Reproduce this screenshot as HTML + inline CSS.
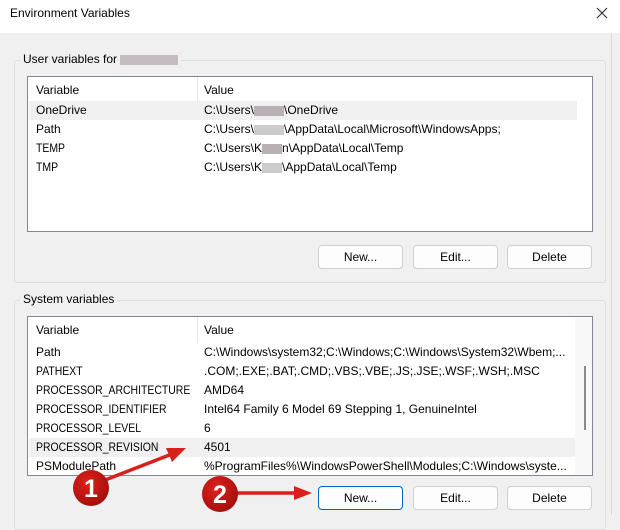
<!DOCTYPE html>
<html><head><style>
*{margin:0;padding:0;box-sizing:border-box}
body{width:620px;height:515px;overflow:hidden;background:#f0f0f0;font-family:"Liberation Sans",sans-serif;font-size:12px;color:#000;position:relative}
.a{position:absolute}
.title{left:0;top:0;width:620px;height:33px;background:#fff}
.gb{border:1px solid #dcdcdc;border-radius:3px}
.lbl{background:#f0f0f0;padding:0 3px}
.list{background:#fff;border:1px solid #828790}
.row{position:absolute;left:1px;height:19px;line-height:19px;white-space:nowrap}
.row span{position:absolute}
.row span.v{transform:scaleX(0.87);transform-origin:0 50%}
.btn{background:#fdfdfd;border:1px solid #d0d0d0;border-radius:4px;height:24px;width:85px;text-align:center;line-height:22px}
.blur{display:inline-block;background:#b8b0b4;height:10px;vertical-align:middle}
</style></head><body>
<div class="a title"></div>
<div class="a" style="left:10px;top:6px;font-size:12px">Environment Variables</div>
<svg class="a" style="left:595px;top:6px" width="14" height="14"><path d="M2 2L12 12M12 2L2 12" stroke="#333" stroke-width="1.2"/></svg>
<div class="a" style="left:611px;top:33px;width:1px;height:482px;background:#d8d8d8"></div>

<div class="a gb" style="left:14px;top:60px;width:592px;height:223px"></div>
<div class="a lbl" style="left:20px;top:52px">User variables for <span class="blur" style="width:58px;background:#c4bcc0"></span></div>
<div class="a list" style="left:27px;top:76px;width:566px;height:156px">
 <div class="a" style="left:169px;top:0;width:1px;height:26px;background:#e5e5e5"></div>
 <div class="row" style="top:4px;width:548px"><span style="left:7px">Variable</span><span style="left:175px">Value</span></div>
 <div class="row" style="top:24px;width:548px;background:#f0f0f0"><span style="left:7px">OneDrive</span><span style="left:175px">C:\Users\<span class="blur" style="width:30px;position:static"></span>\OneDrive</span></div>
 <div class="row" style="top:43px;width:548px"><span style="left:7px">Path</span><span style="left:175px">C:\Users\<span class="blur" style="width:30px;position:static;background:#ccc"></span>\AppData\Local\Microsoft\WindowsApps;</span></div>
 <div class="row" style="top:62px;width:548px"><span class="v" style="left:7px">TEMP</span><span style="left:175px">C:\Users\K<span class="blur" style="width:20px;position:static"></span>n\AppData\Local\Temp</span></div>
 <div class="row" style="top:81px;width:548px"><span class="v" style="left:7px">TMP</span><span style="left:175px">C:\Users\K<span class="blur" style="width:20px;position:static;background:#ccc"></span>\AppData\Local\Temp</span></div>
</div>
<div class="a btn" style="left:318px;top:245px">New...</div>
<div class="a btn" style="left:413px;top:245px">Edit...</div>
<div class="a btn" style="left:507px;top:245px">Delete</div>

<div class="a gb" style="left:14px;top:300px;width:592px;height:230px"></div>
<div class="a lbl" style="left:20px;top:292px">System variables</div>
<div class="a list" style="left:27px;top:316px;width:566px;height:160px;overflow:hidden">
 <div class="a" style="left:169px;top:0;width:1px;height:26px;background:#e5e5e5"></div>
 <div class="a" style="left:547px;top:0;width:18px;height:160px;background:#f8f8f8"></div>
 <div class="a" style="left:556px;top:49px;width:2px;height:64px;background:#8a8a8a"></div>
 <div class="row" style="top:4px;width:548px"><span style="left:7px">Variable</span><span style="left:175px">Value</span></div>
 <div class="row" style="top:26px;width:548px"><span style="left:7px">Path</span><span style="left:175px">C:\Windows\system32;C:\Windows;C:\Windows\System32\Wbem;...</span></div>
 <div class="row" style="top:45px;width:548px"><span class="v" style="left:7px">PATHEXT</span><span style="left:175px">.COM;.EXE;.BAT;.CMD;.VBS;.VBE;.JS;.JSE;.WSF;.WSH;.MSC</span></div>
 <div class="row" style="top:64px;width:548px"><span class="v" style="left:7px">PROCESSOR_ARCHITECTURE</span><span style="left:175px">AMD64</span></div>
 <div class="row" style="top:83px;width:548px"><span class="v" style="left:7px">PROCESSOR_IDENTIFIER</span><span style="left:175px">Intel64 Family 6 Model 69 Stepping 1, GenuineIntel</span></div>
 <div class="row" style="top:102px;width:548px"><span class="v" style="left:7px">PROCESSOR_LEVEL</span><span style="left:175px">6</span></div>
 <div class="row" style="top:121px;width:546px;background:#f0f0f0"><span class="v" style="left:7px">PROCESSOR_REVISION</span><span style="left:175px">4501</span></div>
 <div class="row" style="top:140px;width:548px"><span style="left:7px">PSModulePath</span><span style="left:175px">%ProgramFiles%\WindowsPowerShell\Modules;C:\Windows\syste...</span></div>
</div>
<div class="a btn" style="left:318px;top:486px;border-color:#0067c0">New...</div>
<div class="a btn" style="left:413px;top:486px">Edit...</div>
<div class="a btn" style="left:507px;top:486px">Delete</div>

<svg class="a" style="left:0;top:0" width="620" height="515">
 <defs><radialGradient id="g" cx="40%" cy="35%" r="70%"><stop offset="0" stop-color="#e0201c"/><stop offset="1" stop-color="#a00e0c"/></radialGradient></defs>
 <path d="M100 482L172 454" stroke="#d8201c" stroke-width="3.5" fill="none"/>
 <path d="M186 448L166 448L172 462Z" fill="#d8201c"/>
 <path d="M235 493L296 493" stroke="#d8201c" stroke-width="3.5"/>
 <path d="M312 493L294 486L294 500Z" fill="#d8201c"/>
 <circle cx="91" cy="488" r="18" fill="url(#g)"/>
 <circle cx="220" cy="494" r="18" fill="url(#g)"/>
 <text x="91" y="497" fill="#fff" font-family="Liberation Sans" font-weight="bold" font-size="25" text-anchor="middle">1</text>
 <text x="220" y="503" fill="#fff" font-family="Liberation Sans" font-weight="bold" font-size="25" text-anchor="middle">2</text>
</svg>
</body></html>
